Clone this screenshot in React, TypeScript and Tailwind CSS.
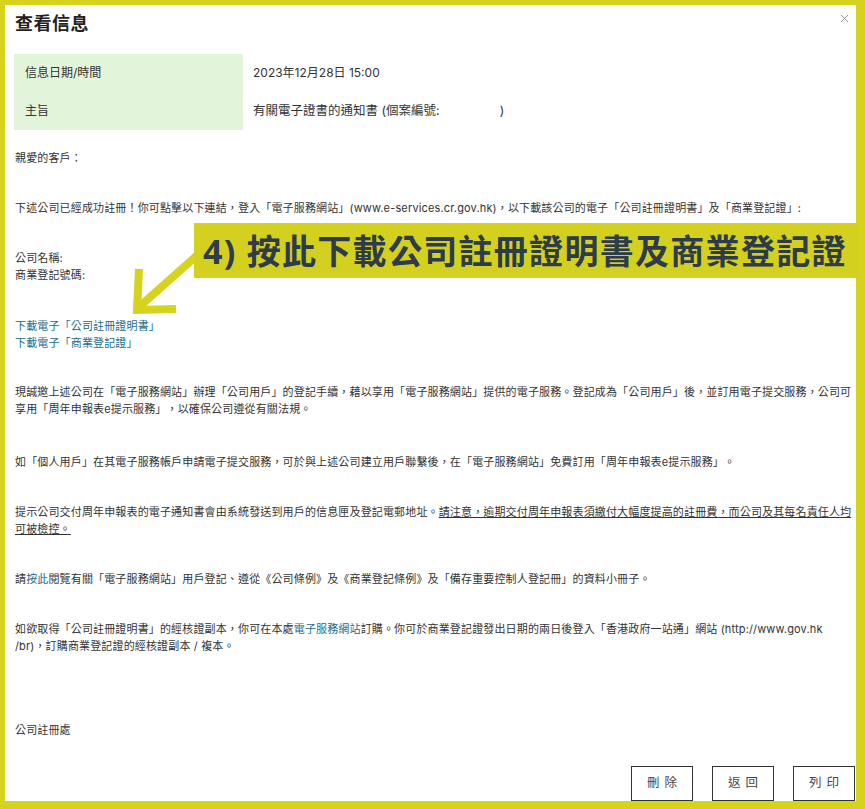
import React from 'react';
import { X } from 'lucide-react';

const Btn = ({ label }: { label: string }) => (
  <button className="w-[62px] h-[35px] border border-[#333] bg-white text-[12.5px] text-[#444] tracking-[5px] pl-[5px] flex items-center justify-center">
    {label}
  </button>
);

const Link = ({ children }: { children: React.ReactNode }) => (
  <a href="#" className="text-[#1a6c8a]">{children}</a>
);

export default function App() {
  return (
    <div className="w-[865px] h-[809px] bg-[#d5d31b] pl-[5px] pt-[5px] pr-[9px] pb-[8px] font-['Inter','Noto_Sans_CJK_TC',sans-serif]">
      <div className="relative h-full bg-white pl-[10px] pr-[1px] pt-[4px] text-[#333] [text-spacing-trim:space-all]">
        {/* header */}
        <div className="flex items-start justify-between h-[26px]">
          <h1 className="text-[18px] leading-[26px] font-bold text-[#222] tracking-[0.5px] font-['Noto_Sans_CJK_TC',sans-serif]">查看信息</h1>
          <button className="mt-[3px] mr-[4px] text-[#777]">
            <X size={13} strokeWidth={1.5} />
          </button>
        </div>

        {/* info table */}
        <div className="mt-[19px] ml-[-1px] grid grid-cols-[229px_1fr] text-[12px]">
          <div className="bg-[#e2f5db] h-[38px] pl-[11px] flex items-center">信息日期/時間</div>
          <div className="h-[38px] pl-[10px] flex items-center">2023年12月28日 15:00</div>
          <div className="bg-[#e2f5db] h-[38px] pl-[11px] flex items-center">主旨</div>
          <div className="h-[38px] pl-[10px] flex items-center text-[12.5px]">
            有關電子證書的通知書 (個案編號:<span className="inline-block w-[60px]"></span>)
          </div>
        </div>

        {/* body */}
        <div className="mt-[20px] text-[11px] leading-[17px] tracking-[0.15px]">
          <p>親愛的客戶：</p>
          <p className="mt-[33px]">
            下述公司已經成功註冊！你可點擊以下連結，登入「電子服務網站」(www.e-services.cr.gov.hk)，以下載該公司的電子「公司註冊證明書」及「商業登記證」:
          </p>
          <p className="mt-[33px]">
            公司名稱:
            <br />
            商業登記號碼:
          </p>
          <p className="mt-[34px]">
            <Link>下載電子「公司註冊證明書」</Link>
            <br />
            <Link>下載電子「商業登記證」</Link>
          </p>
          <p className="mt-[32px]">
            現誠邀上述公司在「電子服務網站」辦理「公司用戶」的登記手續，藉以享用「電子服務網站」提供的電子服務。登記成為「公司用戶」後，並訂用電子提交服務，公司可享用「周年申報表e提示服務」，以確保公司遵從有關法規。
          </p>
          <p className="mt-[36px]">
            如「個人用戶」在其電子服務帳戶申請電子提交服務，可於與上述公司建立用戶聯繫後，在「電子服務網站」免費訂用「周年申報表e提示服務」。
          </p>
          <p className="mt-[33px]">
            提示公司交付周年申報表的電子通知書會由系統發送到用戶的信息匣及登記電郵地址。<span className="underline">請注意，逾期交付周年申報表須繳付大幅度提高的註冊費，而公司及其每名責任人均可被檢控。</span>
          </p>
          <p className="mt-[33px]">
            請<Link>按此</Link>閱覽有關「電子服務網站」用戶登記、遵從《公司條例》及《商業登記條例》及「備存重要控制人登記冊」的資料小冊子。
          </p>
          <p className="mt-[33px]">
            如欲取得「公司註冊證明書」的經核證副本，你可在本處<Link>電子服務網站</Link>訂購。你可於商業登記證發出日期的兩日後登入「香港政府一站通」網站 (http://www.gov.hk
            <br />
            /br)，訂購商業登記證的經核證副本 / 複本。
          </p>
          <p className="mt-[67px]">公司註冊處</p>
        </div>

        {/* actions */}
        <div className="mt-[27px] flex justify-end gap-[19px]">
          <Btn label="刪除" />
          <Btn label="返回" />
          <Btn label="列印" />
        </div>

        {/* annotation overlay */}
        <svg className="absolute left-[115px] top-[240px]" width="90" height="75" viewBox="0 0 90 75">
          <line x1="19" y1="62" x2="82" y2="6" stroke="#d5d31b" strokeWidth="8" />
          <polyline points="19,24 17,65 56,64" fill="none" stroke="#d5d31b" strokeWidth="8" strokeLinejoin="miter" />
        </svg>
        <div className="absolute left-[189px] top-[218px] w-[665px] h-[55px] bg-[#d3d01f] pl-[9px] flex items-center">
          <span className="text-[34px] leading-none font-bold tracking-[1.3px] text-[#2d3b4b] font-['Noto_Sans','Noto_Sans_CJK_TC',sans-serif]">
            4) 按此下載公司註冊證明書及商業登記證
          </span>
        </div>
      </div>
    </div>
  );
}
